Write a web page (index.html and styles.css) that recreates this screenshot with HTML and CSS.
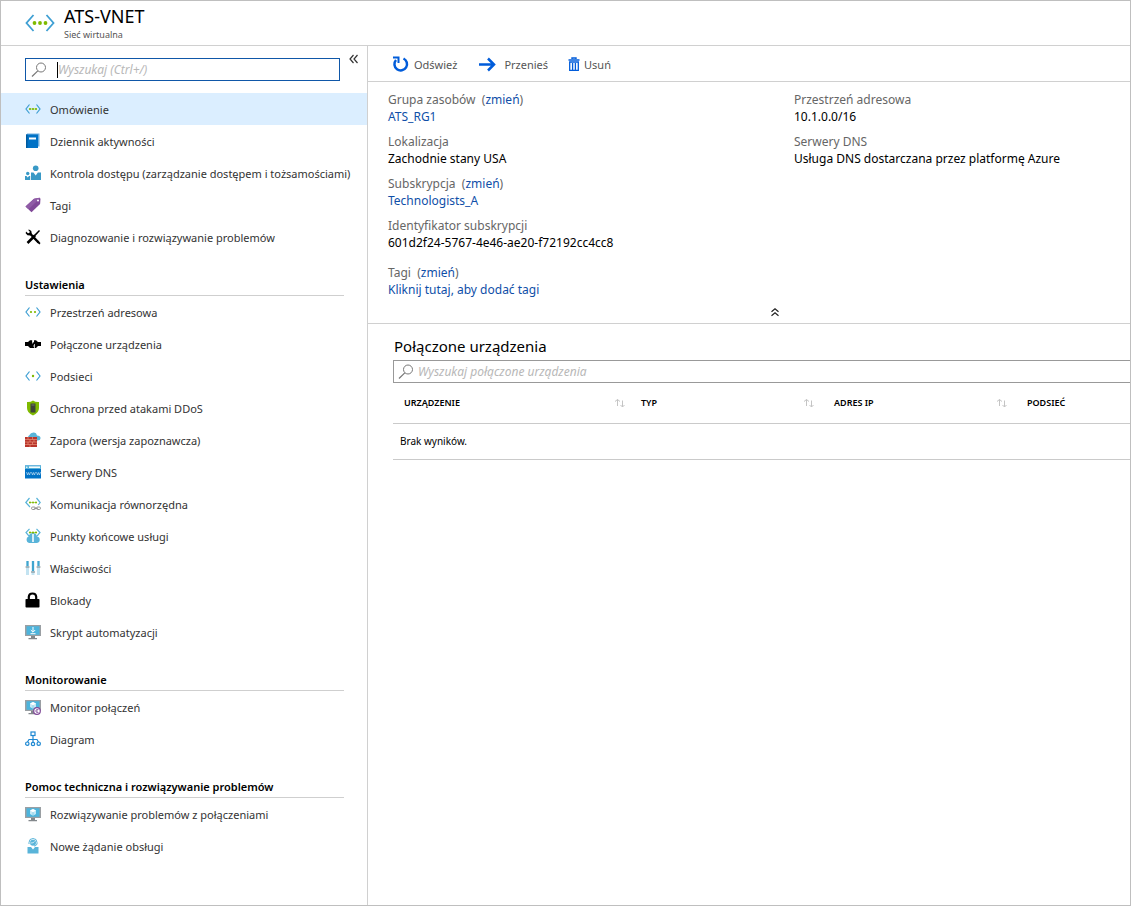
FILE: index.html
```html
<!DOCTYPE html>
<html lang="pl">
<head>
<meta charset="utf-8">
<title>ATS-VNET</title>
<meta name="viewport" content="width=device-width, initial-scale=1">
<link rel="stylesheet" href="styles.css">
</head>
<body>
<svg class="sprite" aria-hidden="true">
  <symbol id="brackets" viewBox="0 0 16 16"><path d="M4.500 3.500 1 8l3.500 4.500M11.500 3.500 15 8l-3.500 4.500" fill="none" stroke="#3e9fd3" stroke-width="1.200"/></symbol>
  <symbol id="search" viewBox="0 0 16 16"><circle cx="10" cy="5.500" r="4.500" fill="none" stroke="#777"/><path d="M6.800 8.900 1 14.500" stroke="#777" stroke-width="1.200"/></symbol>
  <symbol id="screen" viewBox="0 0 16 16"><path d="M0 1h16v11H0z" fill="#9a9fa3"/><path d="M1.500 2.200h13v8.600h-13z" fill="#4db4dc"/><path d="M6 12h4v2h2v1.200H3.500V14H6z" fill="#83888c"/></symbol>
  <symbol id="cube" viewBox="0 0 16 16"><path d="m8 3 3 1.600v3.500L8 9.800 5 8.100V4.600z" fill="#c5e8f5"/><path d="m8 3 3 1.600-3 1.600-3-1.600z" fill="#fff"/><path d="M8 6.200v3.600" stroke="#65bfe0" stroke-width=".6"/></symbol>
  <symbol id="sort" viewBox="0 0 12 10"><path d="M3.500 8V1.500M1 3.500l2.500-2 2.500 2M8.500 2.500V9M6.500 7l2 2 2-2" fill="none" stroke="#c4c4c4"/></symbol>
</svg>
<div class="blade">
  <header class="head">
    <svg class="head-icon" viewBox="0 0 30 18" aria-hidden="true"><path d="M8.500 1 1.500 9l7 8M21.500 1l7 8-7 8" fill="none" stroke="#3e9fd3" stroke-width="1.800"/><g fill="#7fba00"><circle cx="9.500" cy="9" r="1.900"/><circle cx="15" cy="9" r="1.900"/><circle cx="20.500" cy="9" r="1.900"/></g></svg>
    <div>
      <h1 class="title">ATS-VNET</h1>
      <p class="subtitle">Sieć wirtualna</p>
    </div>
  </header>
  <div class="body">
    <aside class="side">
      <div class="side-top">
        <label class="search search-nav"><svg class="icon" aria-hidden="true"><use href="#search"/></svg><span class="caret"></span><input type="text" aria-label="Wyszukaj" placeholder="Wyszukaj (Ctrl+/)"></label>
        <button class="collapse" type="button" aria-label="Zwiń menu"><svg class="chev" viewBox="0 0 10 10"><path d="M4.500 1 1 5l3.500 4M8.500 1 5 5l3.500 4" fill="none" stroke="#333" stroke-width="1.200"/></svg></button>
      </div>
      <nav>
        <ul class="menu">
          <li><a class="item active" href="#"><svg class="icon" viewBox="0 0 16 16"><use href="#brackets"/><path d="M4 8h8" stroke="#b7d978"/><g fill="#7fba00"><circle cx="5" cy="8" r="1.100"/><circle cx="8" cy="8" r="1.100"/><circle cx="11" cy="8" r="1.100"/></g></svg>Omówienie</a></li>
          <li><a class="item" href="#"><svg class="icon" viewBox="0 0 16 16"><path d="M2 .5h12.500v13H2z" fill="#6eaee0"/><path d="M1 1.500h12V15H1z" fill="#0072c6"/><path d="M1 1.500h1.500V15H1z" fill="#005a9e"/><path d="M4 4.500h7v2H4z" fill="#fff"/></svg>Dziennik aktywności</a></li>
          <li><a class="item" href="#"><svg class="icon" viewBox="0 0 16 16"><g fill="#3999c6"><circle cx="10.700" cy="3.300" r="2.800"/><path d="M6 7.500h2.500l2.200 3 2.200-3H16V15H6z"/><circle cx="2.700" cy="8.500" r="1.700"/><path d="M0 11h1.500l1.200 1.500L4 11h1.200v4H0z"/></g></svg>Kontrola dostępu (zarządzanie dostępem i tożsamościami)</a></li>
          <li><a class="item" href="#"><svg class="icon" viewBox="0 0 16 16"><path d="M9 1.800 14.500.8l1 1-.4 5.200L6.500 15.200.5 9.500z" fill="#804998"/><path d="M9 1.800 14.500.8l.5.500L3.500 12.300.5 9.500z" fill="#8f5ba6"/><circle cx="13" cy="3.400" r="1" fill="#fff"/></svg>Tagi</a></li>
          <li><a class="item" href="#"><svg class="icon" viewBox="0 0 16 16"><path d="M2.500 14 10 6.500M5 4.500l8.500 9" stroke="#000" stroke-width="2.500"/><path d="M14 1 8.500 6.500l1.200 1.200L15 2z"/><path d="M1 2.500.7 4.200 2.500 6.200l2.700.2 1.500-1.800L6.300 2 4.500.7H3l1.700 1.900-.3 1.300-1.400.4zM13 11.500l2.500 2.500-1 1.500L12 13.500z"/></svg>Diagnozowanie i rozwiązywanie problemów</a></li>
        </ul>
        <h2 class="group">Ustawienia</h2>
        <ul class="menu">
          <li><a class="item" href="#"><svg class="icon" viewBox="0 0 16 16"><use href="#brackets"/><circle cx="6" cy="8" r="1.100" fill="#7fba00"/><circle cx="10" cy="8" r="1.100" fill="#7fba00"/></svg>Przestrzeń adresowa</a></li>
          <li><a class="item" href="#"><svg class="icon" viewBox="0 0 16 16"><path d="M0 6h3l2-1.700h2.500V6H9V4.300h2L13 6h3v4h-3l-2 2H5L3 10H0z"/><path d="M7.500 4v3.500M9.500 8V12M7.500 6H9M8 10h1.500" stroke="#fff" stroke-width=".7"/></svg>Połączone urządzenia</a></li>
          <li><a class="item" href="#"><svg class="icon" viewBox="0 0 16 16"><use href="#brackets"/><circle cx="8" cy="8" r="1.200" fill="#7fba00"/></svg>Podsieci</a></li>
          <li><a class="item" href="#"><svg class="icon" viewBox="0 0 16 16"><path d="M8 .5q2.500 1.800 6 1.500v6q0 5-6 7.500Q2 13 2 8V2Q5.500 2.300 8 .5z" fill="#7fba00"/><path d="M5.500 3.500h5v9h-5z" fill="#3e4436"/><path d="M6.500 5h3" stroke="#8a9283" stroke-width=".7"/></svg>Ochrona przed atakami DDoS</a></li>
          <li><a class="item" href="#"><svg class="icon" viewBox="0 0 16 16"><path d="M5 8.500a3 3 0 0 1-.5-5.500Q5.500.3 9 .5q2.500.2 3 3 3.500 0 3.500 2.500T12.500 8.500z" fill="#59b4d9"/><path d="M0 5h12v10H0z" fill="#b9352c"/><path d="M0 7.500h12M0 10h12M0 12.500h12M3 5v2.500M7.500 5v2.500M5 7.500V10M9 7.500V10M3 10v2.500M7.500 10v2.500M5 12.500V15" stroke="#e8917a" stroke-width=".7"/></svg>Zapora (wersja zapoznawcza)</a></li>
          <li><a class="item" href="#"><svg class="icon" viewBox="0 0 16 16"><path d="M0 1.500h16v13H0z" fill="#0072c6"/><path d="M0 1.500h16v3.500H0z" fill="#59b4d9"/><path d="M4 3.200h11" stroke="#fff" stroke-width="1.500"/><circle cx="1.800" cy="3.200" r=".8" fill="#fff"/><path d="m1.500 8 1 3 1-2.500 1 2.500 1-3m1 0 1 3 1-2.500 1 2.500 1-3m1 0 1 3 1-2.500 1 2.500 1-3" fill="none" stroke="#d7eaf7" stroke-width=".6"/></svg>Serwery DNS</a></li>
          <li><a class="item" href="#"><svg class="icon" viewBox="0 0 16 16"><path d="M4.500 2 .8 6.500 5 11M11.500 2l3.700 4.500-2 2.500" fill="none" stroke="#59b4d9" stroke-width="1.200"/><path d="M4 6.500h8" stroke="#b7d978"/><g fill="#7fba00"><circle cx="5" cy="6.500" r="1"/><circle cx="8" cy="6.500" r="1"/><circle cx="11" cy="6.500" r="1"/></g><g fill="#fff" stroke="#888" stroke-width=".9"><rect x="6.500" y="11" width="4" height="2.500" rx="1.200"/><rect x="11.500" y="11" width="4" height="2.500" rx="1.200"/><path d="M9 12.300h4"/></g></svg>Komunikacja równorzędna</a></li>
          <li><a class="item" href="#"><svg class="icon" viewBox="0 0 16 16"><path d="M4 15a3.500 3.500 0 0 1-.5-6.500q1-3.500 4.500-3.500 3.500.3 4 3.500a3.300 3.300 0 0 1 0 6.500z" fill="#59b4d9"/><path d="M4.500.8 1 4.500l3 3.700M11.500.8 15 4.500l-3 3.700" fill="none" stroke="#59b4d9" stroke-width="1.200"/><path d="M7 6h2v8H7z" fill="#d8eef8"/><path d="M4 4.500h8" stroke="#b7d978"/><g fill="#7fba00"><circle cx="5" cy="4.500" r="1.100"/><circle cx="8" cy="4.500" r="1.100"/><circle cx="11" cy="4.500" r="1.100"/></g></svg>Punkty końcowe usługi</a></li>
          <li><a class="item" href="#"><svg class="icon" viewBox="0 0 16 16"><path d="M1 1h3v14H1zM6.500 1h3v14h-3zM12 1h3v14h-3z" fill="#c3e3f1"/><path d="M1.500 1h2v5h-2zM7 1h2v10H7zM12.500 1h2v5h-2z" fill="#3fa5cf"/><path d="M.5 7h4M6 12h4M11.500 7h4" stroke="#7a8589" stroke-width="1"/></svg>Właściwości</a></li>
          <li><a class="item" href="#"><svg class="icon" viewBox="0 0 16 16"><path d="M3.800 8V4.800Q4 1.500 7.500 1.500T11.200 4.800V8" fill="none" stroke="#000" stroke-width="2.200"/><rect x=".5" y="7" width="14" height="8.500" rx=".8"/></svg>Blokady</a></li>
          <li><a class="item" href="#"><svg class="icon" viewBox="0 0 16 16"><use href="#screen"/><path d="M8 3v5M5.800 6 8 8.200 10.200 6M5.500 9.700h5" fill="none" stroke="#fff"/></svg>Skrypt automatyzacji</a></li>
        </ul>
        <h2 class="group">Monitorowanie</h2>
        <ul class="menu">
          <li><a class="item" href="#"><svg class="icon" viewBox="0 0 16 16"><use href="#screen"/><use href="#cube"/><circle cx="12" cy="12" r="3.300" fill="#fff" stroke="#804998" stroke-width="1.200"/><path d="M13.500 10.500q-2.500-.8-2.800 1.500.3 2.200 2.800 1.500M11 12h2" fill="none" stroke="#804998" stroke-width=".8"/></svg>Monitor połączeń</a></li>
          <li><a class="item" href="#"><svg class="icon" viewBox="0 0 16 16"><g fill="none" stroke="#1e88d2" stroke-width="1.200"><rect x="6" y="1" width="4" height="3.500"/><path d="M8 4.500v7M2.500 11 4 8.500h8L13.500 11"/><circle cx="2.300" cy="12.700" r="1.700"/><circle cx="8" cy="13" r="1.700" fill="#fff"/><circle cx="13.700" cy="12.700" r="1.700"/></g></svg>Diagram</a></li>
        </ul>
        <h2 class="group">Pomoc techniczna i rozwiązywanie problemów</h2>
        <ul class="menu">
          <li><a class="item" href="#"><svg class="icon" viewBox="0 0 16 16"><use href="#screen"/><use href="#cube"/></svg>Rozwiązywanie problemów z połączeniami</a></li>
          <li><a class="item" href="#"><svg class="icon" viewBox="0 0 16 16"><circle cx="8" cy="4.700" r="3" fill="#59b4d9"/><path d="M4 6V4.500a4 4 0 0 1 8 0V6M12 6q-.5 2-3 2" fill="none" stroke="#59b4d9"/><path d="M2.500 9H6l2 2.500L10 9h3.500v6.500h-11z" fill="#59b4d9"/><path d="M5.500 5q3 .3 4-1.500" fill="none" stroke="#fff" stroke-width=".7"/></svg>Nowe żądanie obsługi</a></li>
        </ul>
      </nav>
    </aside>
    <main class="main">
      <div class="toolbar">
        <button class="tool" type="button"><svg class="tool-icon" viewBox="0 0 17 17"><path d="M11.500 2.500A6.300 6.300 0 1 1 4 4" fill="none" stroke="#015cda" stroke-width="2.500"/><path d="M1 .5h6.500V7H5.500V2.500H1z" fill="#015cda"/></svg>Odśwież</button>
        <button class="tool tool-move" type="button"><svg class="tool-icon" viewBox="0 0 17 17"><path d="M0 8.500h14.500M9 2.500l6 6-6 6" fill="none" stroke="#015cda" stroke-width="2.500"/></svg>Przenieś</button>
        <button class="tool tool-delete" type="button"><svg class="tool-icon bin" viewBox="0 0 12 16"><path d="M4 2V1h4v1M.5 3h11" fill="none" stroke="#015cda" stroke-width="1.400"/><path d="M1.700 5h8.600v8.300H1.700zM4.600 6v7M7.400 6v7" fill="none" stroke="#015cda" stroke-width="1.300"/></svg>Usuń</button>
      </div>
      <section class="essentials">
        <div class="facts">
          <dl>
            <div class="fact"><dt>Grupa zasobów&nbsp; (<a href="#">zmień</a>)</dt><dd><a href="#">ATS_RG1</a></dd></div>
            <div class="fact"><dt>Lokalizacja</dt><dd>Zachodnie stany USA</dd></div>
            <div class="fact"><dt>Subskrypcja&nbsp; (<a href="#">zmień</a>)</dt><dd><a href="#">Technologists_A</a></dd></div>
            <div class="fact"><dt>Identyfikator subskrypcji</dt><dd>601d2f24-5767-4e46-ae20-f72192cc4cc8</dd></div>
          </dl>
          <dl>
            <div class="fact"><dt>Przestrzeń adresowa</dt><dd>10.1.0.0/16</dd></div>
            <div class="fact"><dt>Serwery DNS</dt><dd>Usługa DNS dostarczana przez platformę Azure</dd></div>
          </dl>
        </div>
        <dl class="tags">
          <div class="fact"><dt>Tagi&nbsp; (<a href="#">zmień</a>)</dt><dd><a href="#">Kliknij tutaj, aby dodać tagi</a></dd></div>
        </dl>
        <button class="fold" type="button" aria-label="Zwiń podstawowe informacje"><svg class="chev" viewBox="0 0 10 10"><path d="m1.500 4.800 3.500-3 3.500 3M1.500 8.800l3.500-3 3.500 3" fill="none" stroke="#222" stroke-width="1.200"/></svg></button>
      </section>
      <section class="devices">
        <h2 class="devices-title">Połączone urządzenia</h2>
        <label class="search search-devices"><svg class="icon" aria-hidden="true"><use href="#search"/></svg><input type="text" aria-label="Wyszukaj połączone urządzenia" placeholder="Wyszukaj połączone urządzenia"></label>
        <table class="grid">
          <thead><tr>
            <th class="col-device"><div class="th">URZĄDZENIE<svg class="sort"><use href="#sort"/></svg></div></th>
            <th class="col"><div class="th">TYP<svg class="sort"><use href="#sort"/></svg></div></th>
            <th class="col"><div class="th">ADRES IP<svg class="sort"><use href="#sort"/></svg></div></th>
            <th><div class="th">PODSIEĆ</div></th>
          </tr></thead>
          <tbody><tr><td colspan="4">Brak wyników.</td></tr></tbody>
        </table>
      </section>
    </main>
  </div>
</div>
</body>
</html>
```
FILE: styles.css
```css
* { box-sizing: border-box; }
body, h1, h2, p, ul, dl, dd { margin: 0; padding: 0; }
body {
  font-family: "Noto Sans", "Open Sans", sans-serif;
  font-size: 12px;
  line-height: 17px;
  color: #000;
  background: #fff;
}
button, input { font: inherit; color: inherit; }
button { border: 0; padding: 0; background: none; }
a { color: #0f4fa8; text-decoration: none; }
svg { display: block; flex: none; }
.sprite { position: absolute; width: 0; height: 0; }

.blade {
  display: flex;
  flex-direction: column;
  min-height: 100vh;
  border: 1px solid #bfbfbf;
}
.head {
  display: flex;
  gap: 9px;
  padding: 3px 24px 4px;
  border-bottom: 1px solid #d0d0d0;
}
.head-icon { width: 30px; height: 18px; margin-top: 10px; }
.title { font-size: 18px; font-weight: 400; line-height: 24px; }
.subtitle { font-size: 9px; line-height: 13px; color: #555; }
.body { display: flex; flex: 1; }

.side {
  flex: none;
  width: 367px;
  border-right: 1px solid #d0d0d0;
}
.side-top {
  display: flex;
  align-items: flex-start;
  gap: 9px;
  padding: 12px 8px 12px 24px;
}
.search {
  display: flex;
  align-items: center;
  height: 23px;
}
.search input {
  flex: 1;
  min-width: 0;
  padding: 0;
  border: 0;
  outline: 0;
  background: none;
}
.search input::placeholder { color: #b8b8b8; font-style: italic; opacity: 1; }
.search-nav { flex: 1; padding: 0 5px; border: 1px solid #0f57a8; }
.caret { width: 1px; height: 16px; margin-left: 10px; background: #000; }
.collapse { margin-top: -4px; }
.chev { width: 10px; height: 10px; }
.menu { list-style: none; }
.item {
  display: flex;
  align-items: center;
  gap: 9px;
  height: 32px;
  padding-left: 24px;
  color: #333;
  font-size: 11px;
  white-space: nowrap;
}
.item.active { background: #dbeeff; }
.icon { width: 16px; height: 16px; }
.group {
  margin: 0 23px 0 24px;
  padding: 23px 0 2px;
  border-bottom: 1px solid #cfcfcf;
  font-size: 11px;
  font-weight: 600;
}

.main { flex: 1; min-width: 0; }
.toolbar {
  display: flex;
  align-items: center;
  height: 36px;
  padding: 2px 0 0 24px;
  border-bottom: 1px solid #d0d0d0;
}
.tool { display: flex; align-items: center; gap: 5px; color: #555; font-size: 11px; }
.tool-icon { width: 17px; height: 17px; }
.bin { width: 12px; height: 16px; }
.tool-move { gap: 8px; margin-left: 22px; }
.tool-delete { gap: 4px; margin-left: 20px; }

.essentials {
  padding: 9px 0 6px 20px;
  border-bottom: 1px solid #d0d0d0;
}
.facts { display: grid; grid-template-columns: 29fr 24fr; }
.fact { margin-bottom: 8px; }
dt { color: #666; }
.tags { margin-top: 5px; }
.fold { display: block; margin: 9px auto 0; padding-left: 32px; }

.devices { padding-left: 25px; }
.devices-title {
  padding: 11px 0 3px 1px;
  font-size: 15px;
  font-weight: 400;
  line-height: 22px;
}
.search-devices { gap: 4px; padding: 0 4px; border: 1px solid #999; border-right: 0; }
.grid { width: 100%; border-collapse: collapse; table-layout: fixed; }
.grid th {
  height: 40px;
  padding: 0 8px 0 11px;
  border-bottom: 1px solid #cacaca;
  font-size: 9px;
  font-weight: 600;
  text-align: left;
}
.grid .col-device { width: 237px; padding-right: 4px; }
.grid .col { width: 193px; }
.th { display: flex; align-items: center; justify-content: space-between; }
.sort { width: 12px; height: 10px; }
.grid td {
  height: 36px;
  padding: 0 7px;
  border-bottom: 1px solid #cacaca;
  font-size: 10px;
}
```
